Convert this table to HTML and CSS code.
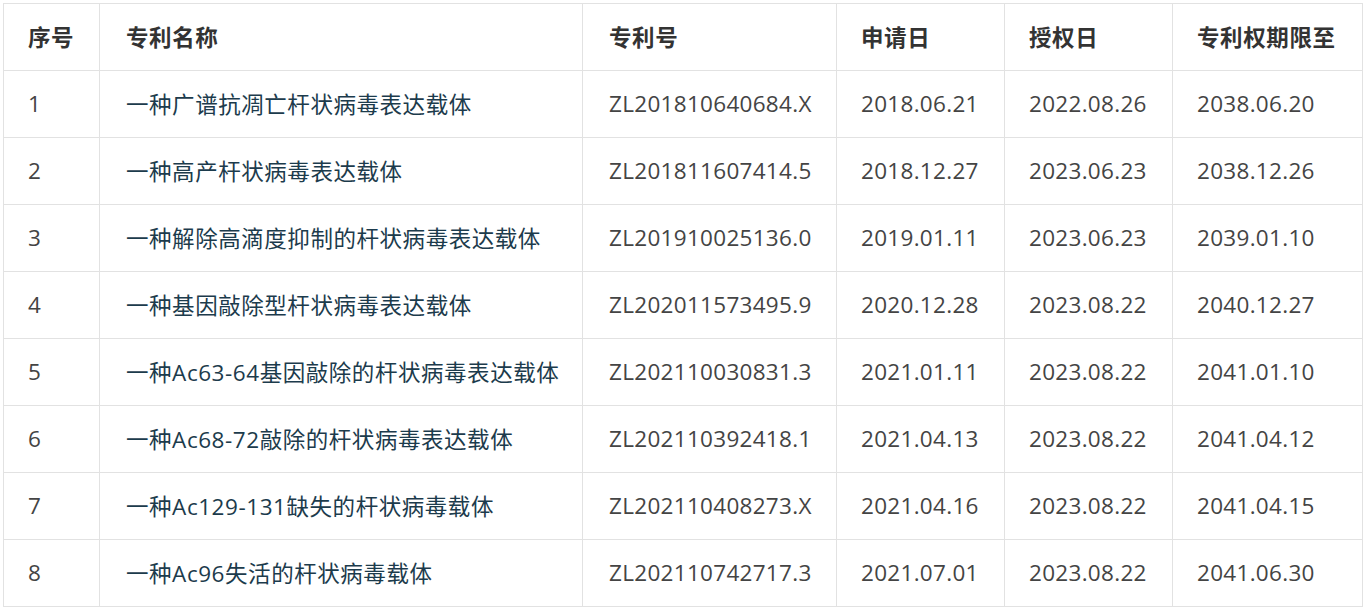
FILE: index.html
```html
<!DOCTYPE html>
<html lang="zh">
<head>
<meta charset="utf-8">
<title>专利列表</title>
<link rel="stylesheet" href="styles.css">
</head>
<body>
<table class="patents">
  <colgroup>
    <col class="c1"><col class="c2"><col class="c3"><col class="c4"><col class="c5"><col class="c6">
  </colgroup>
  <thead>
    <tr><th>序号</th><th class="wide">专利名称</th><th class="wide">专利号</th><th>申请日</th><th>授权日</th><th>专利权期限至</th></tr>
  </thead>
  <tbody>
    <tr><td>1</td><td class="wide"><a class="name" href="#">一种广谱抗凋亡杆状病毒表达载体</a></td><td class="wide">ZL201810640684.X</td><td>2018.06.21</td><td>2022.08.26</td><td>2038.06.20</td></tr>
    <tr><td>2</td><td class="wide"><a class="name" href="#">一种高产杆状病毒表达载体</a></td><td class="wide">ZL201811607414.5</td><td>2018.12.27</td><td>2023.06.23</td><td>2038.12.26</td></tr>
    <tr><td>3</td><td class="wide"><a class="name" href="#">一种解除高滴度抑制的杆状病毒表达载体</a></td><td class="wide">ZL201910025136.0</td><td>2019.01.11</td><td>2023.06.23</td><td>2039.01.10</td></tr>
    <tr><td>4</td><td class="wide"><a class="name" href="#">一种基因敲除型杆状病毒表达载体</a></td><td class="wide">ZL202011573495.9</td><td>2020.12.28</td><td>2023.08.22</td><td>2040.12.27</td></tr>
    <tr><td>5</td><td class="wide"><a class="name" href="#">一种Ac63-64基因敲除的杆状病毒表达载体</a></td><td class="wide">ZL202110030831.3</td><td>2021.01.11</td><td>2023.08.22</td><td>2041.01.10</td></tr>
    <tr><td>6</td><td class="wide"><a class="name" href="#">一种Ac68-72敲除的杆状病毒表达载体</a></td><td class="wide">ZL202110392418.1</td><td>2021.04.13</td><td>2023.08.22</td><td>2041.04.12</td></tr>
    <tr><td>7</td><td class="wide"><a class="name" href="#">一种Ac129-131缺失的杆状病毒载体</a></td><td class="wide">ZL202110408273.X</td><td>2021.04.16</td><td>2023.08.22</td><td>2041.04.15</td></tr>
    <tr><td>8</td><td class="wide"><a class="name" href="#">一种Ac96失活的杆状病毒载体</a></td><td class="wide">ZL202110742717.3</td><td>2021.07.01</td><td>2023.08.22</td><td>2041.06.30</td></tr>
  </tbody>
</table>
</body>
</html>
```
FILE: styles.css
```css
html, body {
  margin: 0;
  padding: 0;
  background: #ffffff;
}
body {
  padding: 3px 0 0 3px;
  font-family: "Open Sans", "Noto Sans CJK SC", sans-serif;
  font-size: 22.5px;
  color: #444444;
}
.patents {
  border-collapse: collapse;
  table-layout: fixed;
  width: 1359px;
}
.c1 { width: 96px; }
.c2 { width: 483px; }
.c3 { width: 254px; }
.c4 { width: 168px; }
.c5 { width: 168px; }
.c6 { width: 190px; }
.patents th,
.patents td {
  border: 1px solid #e2e2e2;
  height: 67px;
  padding: 0 0 2px 24px;
  text-align: left;
  vertical-align: middle;
  white-space: nowrap;
  letter-spacing: 0.3px;
  box-sizing: border-box;
}
.patents .wide {
  padding-left: 26px;
}
.patents th {
  font-weight: 700;
  color: #333333;
  letter-spacing: 0.6px;
}
.name {
  color: #1c3b4c;
  text-decoration: none;
  letter-spacing: 0.55px;
}
```
